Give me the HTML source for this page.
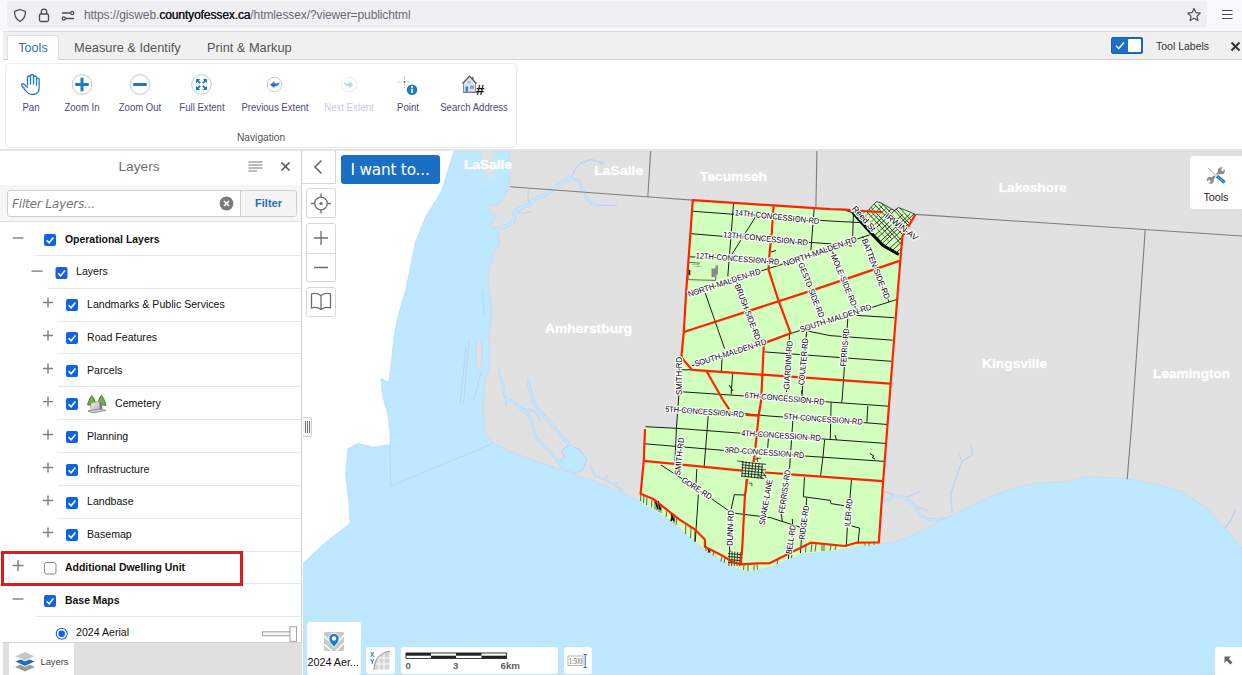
<!DOCTYPE html>
<html lang="en"><head><meta charset="utf-8"><title>County of Essex GIS</title>
<style>
*{box-sizing:border-box;margin:0;padding:0}
html,body{width:1242px;height:675px;overflow:hidden;background:#fff;font-family:"Liberation Sans",sans-serif;color:#222}
.abs{position:absolute}
#urlbar{left:6.500px;top:1px;width:1200px;height:27px;background:#f0f0f4;border-radius:4px}
#url{left:84px;top:8px;font-size:12px;color:#6a6a72;white-space:nowrap;letter-spacing:-0.1px}
#url b{color:#15141a;font-weight:normal;text-shadow:0.3px 0 0 #15141a}
#tabstrip{left:3px;top:31px;width:1239px;height:29px;background:#f0f0f0;border-top:1px solid #dcdcdc;border-bottom:1px solid #d4d4d4}
#tab1{left:7px;top:35px;width:52px;height:25px;background:#fff;border:1px solid #e0e0e0;border-bottom:none;border-radius:3px 3px 0 0;font-size:12.6px;color:#2a70c0;text-align:center;line-height:25px}
.tab{top:35px;height:26px;font-size:12.8px;color:#555;line-height:25px;white-space:nowrap}
#toolbox{left:5px;top:62.500px;width:512px;height:85px;border:1px solid #ececec;border-radius:4px;background:#fff}
.tl{top:100.500px;font-size:10.200px;transform:scaleX(0.940);color:#4d4a78;white-space:nowrap;text-align:center;width:90px;line-height:13px}
#sep150{left:0;top:149px;width:1242px;height:2px;background:#e4e4e4}
#leftpanel{left:0;top:151px;width:302px;height:524px;background:#fff;border-right:1px solid #d0d0d0}
.row{left:0;width:301px;height:33px;font-size:11px;color:#111;white-space:nowrap}
.rowline{height:1px;background:#e6e6e6;right:0}
.cb{width:12px;height:12px;border-radius:2px;background:#1a6fc9}
.cb0{width:12px;height:12px;border-radius:2px;background:#fff;border:1px solid #8a8a8a}
.pm{font-size:17px;color:#666;font-weight:300;line-height:14px;width:14px;text-align:center}
.mbtn{background:#fff;border:1px solid #d8d8d8;border-radius:3px}
</style></head><body>
<!-- browser bar -->
<div class="abs" style="left:0;top:0;width:1242px;height:31px;background:#f9f9fb"></div>
<div class="abs" id="urlbar"></div>
<div class="abs" id="url">https://gisweb.<b>countyofessex.ca</b>/htmlessex/?viewer=publichtml</div>
<svg class="abs" style="left:0;top:0" width="1242" height="31" viewBox="0 0 1242 31" fill="none" stroke="#4a4a52" stroke-width="1.3">
<path d="M20 9.5 L25.5 11.5 Q25.5 18.5 20 21.5 Q14.5 18.5 14.5 11.5 Z"/>
<rect x="39.5" y="14" width="9" height="7.5" rx="1.5"/><path d="M41.3 14 V11.8 A2.7 2.7 0 0 1 46.7 11.8 V14"/>
<path d="M62 13 H70 M66 18.5 H74"/><circle cx="72.2" cy="13" r="1.6"/><circle cx="63.8" cy="18.5" r="1.6"/>
<path d="M1194 8.5 L1195.9 12.6 L1200.3 13.1 L1197 16.1 L1197.9 20.5 L1194 18.3 L1190.1 20.5 L1191 16.1 L1187.7 13.1 L1192.100 12.6 Z" stroke-linejoin="round" stroke-width="1.2"/>
<path d="M1222 10.500 H1232.500 M1222 14.500 H1232.500 M1222 18.500 H1232.500" stroke-width="1.100"/>
</svg>
<!-- tab strip -->
<div class="abs" id="tabstrip"></div>
<div class="abs" id="tab1">Tools</div>
<div class="abs tab" style="left:74px">Measure &amp; Identify</div>
<div class="abs tab" style="left:207px">Print &amp; Markup</div>
<div class="abs" style="left:1111px;top:37px;width:32px;height:17px;background:#1a6fc9;border:1px solid #1860b0;border-radius:2px"></div>
<div class="abs" style="left:1128px;top:39px;width:13px;height:13px;background:#fff;border-radius:1px"></div>
<svg class="abs" style="left:1113px;top:39px" width="14" height="13" viewBox="0 0 14 13" fill="none" stroke="#fff" stroke-width="1.4"><path d="M3 6.8 L5.8 9.5 L11 3.5"/></svg>
<div class="abs" style="left:1156px;top:40px;font-size:10.500px;color:#333;white-space:nowrap">Tool Labels</div>
<svg class="abs" style="left:1230px;top:41px" width="12" height="12" viewBox="0 0 12 12" stroke="#333" stroke-width="2"><path d="M1.5 1.5 L9.5 9.5 M9.500 1.5 L1.5 9.5"/></svg>
<!-- toolbar -->
<div class="abs" id="toolbox"></div>
<svg class="abs" style="left:0;top:60px" width="520" height="90" viewBox="0 60 520 90">
<!-- pan hand -->
<g fill="none" stroke="#1f78c8" stroke-width="1.3" stroke-linecap="round" stroke-linejoin="round">
<path d="M27.5 85 V77.500 a1.500 1.500 0 0 1 3 0 V84 M30.500 77 V76 a1.500 1.500 0 0 1 3 0 V84 M33.500 77.500 a1.500 1.500 0 0 1 3 0 V85 M36.500 79.500 a1.300 1.300 0 0 1 2.600 0 V88 c0 4 -2.500 6.500 -6.500 6.500 c-3.500 0 -5.200 -1.200 -7.500 -4.500 l-3.200 -4.300 c-1 -1.500 0.800 -2.800 2.200 -1.600 l3.400 3.200"/>
</g>
<!-- zoom in -->
<circle cx="82" cy="84.500" r="9.800" fill="#fff" stroke="#c8c8c8" stroke-width="1"/>
<path d="M75.200 84.500 H88.800 M82 77.700 V91.300" stroke="#1f78c8" stroke-width="3"/>
<!-- zoom out -->
<circle cx="140" cy="84.500" r="9.800" fill="#fff" stroke="#c8c8c8" stroke-width="1"/>
<path d="M133.200 84.500 H146.800" stroke="#1f78c8" stroke-width="3"/>
<!-- full extent -->
<circle cx="201.500" cy="84.500" r="9.800" fill="#fff" stroke="#c8c8c8" stroke-width="1"/>
<g fill="#1f78c8"><path d="M196 79 h4.200 l-1.400 1.400 l2 2 l-1.400 1.400 l-2 -2 l-1.400 1.400 z"/><path d="M207 79 v4.200 l-1.400 -1.400 l-2 2 l-1.400 -1.400 l2 -2 l-1.400 -1.400 z"/><path d="M196 90 v-4.200 l1.400 1.400 l2 -2 l1.400 1.400 l-2 2 l1.400 1.400 z"/><path d="M207 90 h-4.200 l1.400 -1.400 l-2 -2 l1.400 -1.400 l2 2 l1.400 -1.400 z"/></g>
<!-- prev extent -->
<circle cx="274.500" cy="84.500" r="7.300" fill="#fff" stroke="#c8c8c8" stroke-width="1"/>
<path d="M270 84.800 L274.500 81.300 V83.600 C277 83.600 278.800 83.200 279.500 82.300 C279.200 85 277.500 86.200 274.500 86.200 V88.300 Z" fill="#1f78c8"/>
<!-- next extent -->
<circle cx="349" cy="84.500" r="7.300" fill="#fff" stroke="#ececec" stroke-width="1"/>
<path d="M353.500 84.800 L349 81.300 V83.600 C346.500 83.600 344.700 83.200 344 82.300 C344.300 85 346 86.200 349 86.200 V88.300 Z" fill="#b9d6ef"/>
<!-- point -->
<path d="M404.500 76 V79.500 M404.500 84 V88 M398 82 H401.500 M407.500 82 H410" stroke="#b0b0b0" stroke-width="1" stroke-dasharray="1.500 1"/>
<circle cx="404.500" cy="82" r="0.900" fill="#555"/>
<circle cx="412" cy="89.800" r="5.300" fill="#1f78c8"/>
<rect x="411.100" y="88.800" width="1.900" height="4" fill="#fff"/><circle cx="412" cy="86.900" r="1.100" fill="#fff"/>
<!-- search address -->
<path d="M463.500 83 L469.500 76.500 L475.500 83 V92 H463.500 Z" fill="#dfe4ea" stroke="#777" stroke-width="0.800"/>
<path d="M462.500 83.500 L469.500 76 L476.500 83.500" fill="none" stroke="#555" stroke-width="1.100"/>
<rect x="472" y="77" width="1.600" height="3" fill="#666"/>
<rect x="465.500" y="86.500" width="2.600" height="5" fill="#2f86d8"/><rect x="470" y="85.500" width="4" height="3.500" fill="#7aa7e6"/><rect x="467.500" y="81" width="3" height="2.500" fill="#9db8ea"/>
<path d="M463 92.500 H477" stroke="#666" stroke-width="0.800"/>
<text x="476" y="95" font-family="Liberation Sans, sans-serif" font-size="15" font-weight="bold" fill="#111">#</text>
</svg>
<div class="abs tl" style="left:-14px">Pan</div>
<div class="abs tl" style="left:37px">Zoom In</div>
<div class="abs tl" style="left:95px">Zoom Out</div>
<div class="abs tl" style="left:156.500px">Full Extent</div>
<div class="abs tl" style="left:229.500px">Previous Extent</div>
<div class="abs tl" style="left:304px;color:#c9c9dc">Next Extent</div>
<div class="abs tl" style="left:362.500px">Point</div>
<div class="abs tl" style="left:429px">Search Address</div>
<div class="abs" style="left:237px;top:132px;font-size:10.200px;color:#555;white-space:nowrap">Navigation</div>
<div class="abs" id="sep150"></div>
<!-- left panel -->
<div class="abs" id="leftpanel"></div>
<div class="abs" style="left:118.500px;top:159px;font-size:13.700px;color:#707070">Layers</div>
<svg class="abs" style="left:246px;top:158px" width="50" height="18" viewBox="246 158 50 18" fill="none"><path d="M248.500 162 H262.500 M248.500 165 H262.500 M248.500 168 H262.500 M248.500 171 H257" stroke="#777" stroke-width="1"/><path d="M281.500 162.500 L289.500 170.500 M289.500 162.500 L281.500 170.500" stroke="#555" stroke-width="1.600"/></svg>
<div class="abs" style="left:0;top:184.500px;width:301px;height:36.500px;background:#f6f6f6"></div>
<div class="abs" style="left:7px;top:190px;width:290px;height:27px;border:1px solid #cfcfcf;border-radius:3px;background:#fff"></div>
<div class="abs" style="left:240px;top:191px;width:56px;height:25px;border-left:1px solid #cfcfcf;background:#f4f4f4;border-radius:0 3px 3px 0;font-size:11px;font-weight:bold;color:#2a6ebb;text-align:center;line-height:24px">Filter</div>
<div class="abs" style="left:12px;top:196.500px;font-size:12.300px;font-style:italic;color:#777;font-family:'DejaVu Sans','Liberation Sans',sans-serif;letter-spacing:-0.3px">Filter Layers...</div>
<svg class="abs" style="left:219px;top:196px" width="15" height="15" viewBox="0 0 15 15"><circle cx="7.500" cy="7.500" r="6.900" fill="#7a7a7a"/><path d="M5 5 L10 10 M10 5 L5 10" stroke="#fff" stroke-width="1.700"/></svg>
<div class="abs" style="left:0;top:221px;width:301px;height:1px;background:#e2e2e2"></div>
<svg class="abs" style="left:0;top:222.7px" width="100" height="33" viewBox="0 222.0 100 33"><path d="M12.5 237.0 H23.5" stroke="#808080" stroke-width="1.400"/><rect x="44" y="233.0" width="12" height="12" rx="2" fill="#0f63e4"/><path d="M46.6 239.2 l2.500 2.600 l4.300 -5.300" fill="none" stroke="#fff" stroke-width="1.600"/></svg>
<div class="abs" style="left:65px;top:232.5px;font-size:10.450px;font-weight:bold;color:#111;white-space:nowrap;line-height:13px">Operational Layers</div>
<div class="abs rowline" style="left:36px;top:254.8px;width:265px"></div>
<svg class="abs" style="left:0;top:255.5px" width="100" height="33" viewBox="0 254.8 100 33"><path d="M31.5 269.9 H42.5" stroke="#808080" stroke-width="1.400"/><rect x="55.5" y="265.9" width="12" height="12" rx="2" fill="#0f63e4"/><path d="M58.1 272.1 l2.500 2.600 l4.300 -5.300" fill="none" stroke="#fff" stroke-width="1.600"/></svg>
<div class="abs" style="left:76px;top:265.4px;font-size:10.600px;font-weight:normal;color:#111;white-space:nowrap;line-height:13px">Layers</div>
<div class="abs rowline" style="left:48px;top:287.7px;width:253px"></div>
<svg class="abs" style="left:0;top:288.4px" width="100" height="33" viewBox="0 287.7 100 33"><path d="M43 302.2 H53 M48 297.2 V307.2" stroke="#808080" stroke-width="1.400"/><rect x="66" y="298.7" width="12" height="12" rx="2" fill="#0f63e4"/><path d="M68.6 304.9 l2.500 2.600 l4.300 -5.300" fill="none" stroke="#fff" stroke-width="1.600"/></svg>
<div class="abs" style="left:87px;top:298.2px;font-size:10.600px;font-weight:normal;color:#111;white-space:nowrap;line-height:13px">Landmarks &amp; Public Services</div>
<div class="abs rowline" style="left:58px;top:320.6px;width:243px"></div>
<svg class="abs" style="left:0;top:321.3px" width="100" height="33" viewBox="0 320.6 100 33"><path d="M43 335.1 H53 M48 330.1 V340.1" stroke="#808080" stroke-width="1.400"/><rect x="66" y="331.6" width="12" height="12" rx="2" fill="#0f63e4"/><path d="M68.6 337.8 l2.500 2.600 l4.300 -5.300" fill="none" stroke="#fff" stroke-width="1.600"/></svg>
<div class="abs" style="left:87px;top:331.1px;font-size:10.600px;font-weight:normal;color:#111;white-space:nowrap;line-height:13px">Road Features</div>
<div class="abs rowline" style="left:58px;top:353.4px;width:243px"></div>
<svg class="abs" style="left:0;top:354.1px" width="100" height="33" viewBox="0 353.4 100 33"><path d="M43 367.9 H53 M48 362.9 V372.9" stroke="#808080" stroke-width="1.400"/><rect x="66" y="364.4" width="12" height="12" rx="2" fill="#0f63e4"/><path d="M68.6 370.6 l2.500 2.600 l4.300 -5.300" fill="none" stroke="#fff" stroke-width="1.600"/></svg>
<div class="abs" style="left:87px;top:363.9px;font-size:10.600px;font-weight:normal;color:#111;white-space:nowrap;line-height:13px">Parcels</div>
<div class="abs rowline" style="left:58px;top:386.2px;width:243px"></div>
<svg class="abs" style="left:0;top:386.9px" width="100" height="33" viewBox="0 386.2 100 33"><path d="M43 400.8 H53 M48 395.7 V405.7" stroke="#808080" stroke-width="1.400"/><rect x="66" y="397.2" width="12" height="12" rx="2" fill="#0f63e4"/><path d="M68.6 403.4 l2.500 2.600 l4.300 -5.300" fill="none" stroke="#fff" stroke-width="1.600"/></svg>
<div class="abs" style="left:115px;top:396.7px;font-size:10.600px;font-weight:normal;color:#111;white-space:nowrap;line-height:13px">Cemetery</div>
<div class="abs rowline" style="left:58px;top:419.1px;width:243px"></div>
<svg class="abs" style="left:0;top:419.8px" width="100" height="33" viewBox="0 419.1 100 33"><path d="M43 433.6 H53 M48 428.6 V438.6" stroke="#808080" stroke-width="1.400"/><rect x="66" y="430.1" width="12" height="12" rx="2" fill="#0f63e4"/><path d="M68.6 436.3 l2.500 2.600 l4.300 -5.300" fill="none" stroke="#fff" stroke-width="1.600"/></svg>
<div class="abs" style="left:87px;top:429.6px;font-size:10.600px;font-weight:normal;color:#111;white-space:nowrap;line-height:13px">Planning</div>
<div class="abs rowline" style="left:58px;top:452.0px;width:243px"></div>
<svg class="abs" style="left:0;top:452.7px" width="100" height="33" viewBox="0 452.0 100 33"><path d="M43 466.5 H53 M48 461.5 V471.5" stroke="#808080" stroke-width="1.400"/><rect x="66" y="463.0" width="12" height="12" rx="2" fill="#0f63e4"/><path d="M68.6 469.2 l2.500 2.600 l4.300 -5.300" fill="none" stroke="#fff" stroke-width="1.600"/></svg>
<div class="abs" style="left:87px;top:462.5px;font-size:10.600px;font-weight:normal;color:#111;white-space:nowrap;line-height:13px">Infrastructure</div>
<div class="abs rowline" style="left:58px;top:484.8px;width:243px"></div>
<svg class="abs" style="left:0;top:485.5px" width="100" height="33" viewBox="0 484.8 100 33"><path d="M43 499.3 H53 M48 494.3 V504.3" stroke="#808080" stroke-width="1.400"/><rect x="66" y="495.8" width="12" height="12" rx="2" fill="#0f63e4"/><path d="M68.6 502.0 l2.500 2.600 l4.300 -5.300" fill="none" stroke="#fff" stroke-width="1.600"/></svg>
<div class="abs" style="left:87px;top:495.3px;font-size:10.600px;font-weight:normal;color:#111;white-space:nowrap;line-height:13px">Landbase</div>
<div class="abs rowline" style="left:58px;top:517.7px;width:243px"></div>
<svg class="abs" style="left:0;top:518.4px" width="100" height="33" viewBox="0 517.7 100 33"><path d="M43 532.2 H53 M48 527.2 V537.2" stroke="#808080" stroke-width="1.400"/><rect x="66" y="528.7" width="12" height="12" rx="2" fill="#0f63e4"/><path d="M68.6 534.9 l2.500 2.600 l4.300 -5.300" fill="none" stroke="#fff" stroke-width="1.600"/></svg>
<div class="abs" style="left:87px;top:528.2px;font-size:10.600px;font-weight:normal;color:#111;white-space:nowrap;line-height:13px">Basemap</div>
<div class="abs rowline" style="left:58px;top:550.5px;width:243px"></div>
<svg class="abs" style="left:0;top:551.2px" width="100" height="33" viewBox="0 550.5 100 33"><path d="M12.5 565.0 H23.5 M18 559.5 V570.5" stroke="#808080" stroke-width="1.400"/><rect x="44.5" y="562.0" width="11.500" height="11.500" rx="2" fill="#fff" stroke="#8a8a8a" stroke-width="1"/></svg>
<div class="abs" style="left:65px;top:561.0px;font-size:10.450px;font-weight:bold;color:#111;white-space:nowrap;line-height:13px">Additional Dwelling Unit</div>
<div class="abs rowline" style="left:36px;top:583.4px;width:265px"></div>
<svg class="abs" style="left:0;top:584.1px" width="100" height="33" viewBox="0 583.4 100 33"><path d="M12.5 598.4 H23.5" stroke="#808080" stroke-width="1.400"/><rect x="44" y="594.4" width="12" height="12" rx="2" fill="#0f63e4"/><path d="M46.6 600.6 l2.500 2.600 l4.300 -5.300" fill="none" stroke="#fff" stroke-width="1.600"/></svg>
<div class="abs" style="left:65px;top:593.9px;font-size:10.450px;font-weight:bold;color:#111;white-space:nowrap;line-height:13px">Base Maps</div>
<div class="abs rowline" style="left:36px;top:616.2px;width:265px"></div>
<svg class="abs" style="left:50px;top:622.7px" width="252" height="20" viewBox="50 622.7 252 20"><circle cx="61.700" cy="633.500" r="5.500" fill="#fff" stroke="#0f63e4" stroke-width="1.100"/><circle cx="61.700" cy="633.500" r="3.300" fill="#0f63e4"/><rect x="262.500" y="631.500" width="29" height="4" fill="#f4f4f4" stroke="#a0a0a0" stroke-width="1"/><rect x="290" y="626.500" width="6.500" height="14.500" fill="#fff" stroke="#a0a0a0" stroke-width="1"/></svg>
<div class="abs" style="left:76px;top:624.7px;font-size:10.600px;color:#111;white-space:nowrap;line-height:13px;margin-top:1.5px">2024 Aerial</div>
<svg class="abs" style="left:87px;top:394.500px" width="21" height="19" viewBox="0 0 21 19"><defs><linearGradient id="stone" x1="0" y1="0" x2="1" y2="1"><stop offset="0" stop-color="#f2f2f2"/><stop offset="1" stop-color="#b4b4b4"/></linearGradient></defs><path d="M0.800 10 C0.500 7.500 2 6.500 2.200 5 C2.500 3 4 2 4.800 0.600 C5.800 2 7 3 7.300 5 C7.800 6.500 8.800 7.500 8.500 10 Z" fill="#72b33c" stroke="#2f6e1c" stroke-width="0.800"/><path d="M10.500 9 C10.200 6.500 11.800 6 12 4.500 C12.300 2.800 13.500 1.500 14.300 0.300 C15.300 1.500 16.800 3 17.200 5 C17.800 7 19.200 8 18.800 10.500 Z" fill="#72b33c" stroke="#2f6e1c" stroke-width="0.800"/><path d="M3.800 8 L12.800 6.300 L12.800 14.300 L3.800 16 Z" fill="url(#stone)" stroke="#777" stroke-width="0.500"/><path d="M12.800 6.300 L15.300 7.300 L15.300 14.800 L12.800 14.300 Z" fill="#7e7e7e"/><path d="M1 16 L4 15.400 L12.800 14 L15.500 14.500 L18.800 15.300 L6 18 Z" fill="#cfcfcf" stroke="#666" stroke-width="0.600"/></svg>
<div class="abs" style="left:1px;top:551px;width:242px;height:35px;border:3px solid #e0191f"></div>
<div class="abs" style="left:2.500px;top:642px;width:299.500px;height:33px;background:#e0e0e0;border-top:1px solid #d2d2d2"></div>
<div class="abs" style="left:0;top:642px;width:2.500px;height:33px;background:#fff"></div>
<div class="abs" style="left:8.500px;top:643px;width:65px;height:32px;background:#fff"></div>
<svg class="abs" style="left:13.500px;top:650.500px" width="22" height="21" viewBox="0 0 22 21"><path d="M11 11.500 L1 16 L11 20.500 L21 16 Z" fill="#9c9c9c"/><path d="M11 5.800 L0.500 10.600 L11 15.400 L21.500 10.600 Z" fill="#1a6fc9" stroke="#fff" stroke-width="1"/><path d="M11 0.500 L0.500 5.200 L11 9.900 L21.500 5.200 Z" fill="#c6c6c6" stroke="#fff" stroke-width="1"/></svg>
<div class="abs" style="left:40.500px;top:657px;font-size:9.300px;color:#444">Layers</div>
<svg class="abs" id="mapsvg" style="left:303px;top:151px" width="939" height="524" viewBox="303 151 939 524" font-family="Liberation Sans, sans-serif">
<rect x="303" y="151" width="939" height="524" fill="#fff"/>
<path d="M454.0 151.0 L441.5 191.0 L425.0 218.0 L415.5 242.0 L405.6 290.0 L397.8 316.7 L394.4 334.4 L391.1 363.3 L388.9 382.2 L381.1 378.4 L382.2 394.4 L387.8 414.4 L390.0 432.2 L390.0 444.4 L373.3 447.3 L357.8 443.3 L347.8 448.9 L345.6 474.4 L348.9 503.3 L350.0 523.3 L324.4 543.3 L303.0 563.5 L303.0 675.0 L1242.0 675.0 L1242.0 151.0 Z" fill="#bee8ff" stroke="#b4d4f6" stroke-width="0.6"/>
<path d="M510.0 151.0 L510.0 185.6 L504.4 196.7 L497.8 205.6 L486.7 205.6 L495.6 216.7 L490.0 226.7 L497.8 231.1 L500.0 243.3 L493.3 254.4 L487.8 276.7 L488.9 290.0 L492.2 312.2 L488.9 334.4 L490.0 363.3 L485.6 378.9 L483.3 401.1 L484.4 427.8 L488.0 438.0 L493.3 443.3 L508.9 451.1 L535.6 461.1 L568.9 472.2 L591.1 480.0 L613.3 488.9 L635.6 498.9 L640.0 501.8 L662.6 515.3 L678.9 527.6 L695.2 542.2 L711.5 553.6 L727.8 564.2 L740.8 570.0 L750.6 571.5 L770.0 566.8 L802.6 553.8 L835.0 550.5 L861.0 545.5 L878.8 544.4 L893.8 541.9 L905.2 538.5 L937.8 522.2 L970.3 505.9 L1002.9 491.6 L1031.4 483.5 L1068.1 481.5 L1084.4 476.6 L1108.8 477.4 L1133.3 479.4 L1161.8 485.5 L1182.2 491.6 L1206.6 507.9 L1227.0 530.3 L1242.0 548.7 L1242.0 151.0 Z" fill="#e1e1e1" stroke="#c9d3e6" stroke-width="0.6"/>
<path d="M482.0 151.0 L483.0 170.0 L487.0 176.0 L491.5 179.0 L493.3 176.0 L492.0 160.0 L493.5 151.0 Z" fill="#e1e1e1"/>
<ellipse cx="478.9" cy="354.4" rx="3" ry="16" fill="#e1e1e1" stroke="#b9cdf3" stroke-width="0.5"/>
<path d="M390 444.4 L390.700 486 L493.300 443.300" fill="none" stroke="#b4cdf5" stroke-width="0.700"/>
<path d="M466 348 L460 404 M469 340 L463.500 404 M481 372 L474 400 M484 316 L482.500 290" fill="none" stroke="#b4c8f2" stroke-width="0.600"/>
<clipPath id="landclip"><path d="M510.0 151.0 L510.0 185.6 L504.4 196.7 L497.8 205.6 L486.7 205.6 L495.6 216.7 L490.0 226.7 L497.8 231.1 L500.0 243.3 L493.3 254.4 L487.8 276.7 L488.9 290.0 L492.2 312.2 L488.9 334.4 L490.0 363.3 L485.6 378.9 L483.3 401.1 L484.4 427.8 L488.0 438.0 L493.3 443.3 L508.9 451.1 L535.6 461.1 L568.9 472.2 L591.1 480.0 L613.3 488.9 L635.6 498.9 L640.0 501.8 L662.6 515.3 L678.9 527.6 L695.2 542.2 L711.5 553.6 L727.8 564.2 L740.8 570.0 L750.6 571.5 L770.0 566.8 L802.6 553.8 L835.0 550.5 L861.0 545.5 L878.8 544.4 L893.8 541.9 L905.2 538.5 L937.8 522.2 L970.3 505.9 L1002.9 491.6 L1031.4 483.5 L1068.1 481.5 L1084.4 476.6 L1108.8 477.4 L1133.3 479.4 L1161.8 485.5 L1182.2 491.6 L1206.6 507.9 L1227.0 530.3 L1242.0 548.7 L1242.0 151.0 Z"/></clipPath>
<g clip-path="url(#landclip)">
<path d="M487.8 232.7 L493.3 230.0 L506.7 225.6 L513.3 222.2 L514.4 212.2 L520.0 208.2 L528.9 204.4 L533.3 200.0 L546.7 193.3 L555.6 187.8 L564.4 181.1 L571.1 177.8" fill="none" stroke="#b9cbf6" stroke-width="3.7" stroke-linejoin="round" stroke-linecap="round"/>
<path d="M571.1 177.8 L578.9 181.1 L582.2 188.9 L585.6 192.2 L586.7 197.8 L591.1 203.3 L595.6 205.1" fill="none" stroke="#b9cbf6" stroke-width="2.7" stroke-linejoin="round" stroke-linecap="round"/>
<path d="M595.6 205.1 L616.7 205.6" fill="none" stroke="#bcd0f8" stroke-width="1.2" stroke-linejoin="round" stroke-linecap="round"/>
<path d="M571.1 177.8 L575.6 168.9 L580.0 163.3 L591.1 159.3 L603.3 163.3" fill="none" stroke="#bcd0f8" stroke-width="1.3" stroke-linejoin="round" stroke-linecap="round"/>
<path d="M528.9 204.4 L527.8 194.4 L528.9 190.0" fill="none" stroke="#bcd0f8" stroke-width="1.1" stroke-linejoin="round" stroke-linecap="round"/>
<path d="M514.4 212.2 L524.4 213.3 L531.1 211.8" fill="none" stroke="#bcd0f8" stroke-width="1.1" stroke-linejoin="round" stroke-linecap="round"/>
<path d="M498.9 370.0 L501.0 378.0 L502.1 381.0" fill="none" stroke="#b9cbf6" stroke-width="2.2" stroke-linejoin="round" stroke-linecap="round"/>
<path d="M502.1 380.0 L504.1 391.6 L506.0 399.3 L512.7 401.2 L521.4 408.9 L530.1 416.6 L532.9 426.2 L535.8 437.8 L543.5 445.5 L551.2 453.2 L557.0 460.9 L562.8 467.6 L574.3 472.4" fill="none" stroke="#b9cbf6" stroke-width="2.7" stroke-linejoin="round" stroke-linecap="round"/>
<path d="M506.0 399.3 L506.0 406.0" fill="none" stroke="#bcd0f8" stroke-width="1.3" stroke-linejoin="round" stroke-linecap="round"/>
<path d="M528.1 380.0 L530.1 391.6 L534.9 405.0 L545.5 417.5 L557.0 430.1 L562.8 437.8 L570.5 445.5 L576.3 451.2" fill="none" stroke="#b9cbf6" stroke-width="2.9" stroke-linejoin="round" stroke-linecap="round"/>
<path d="M521.4 408.9 L528.1 410.4 L534.9 410.8 L539.7 418.5" fill="none" stroke="#b9cbf6" stroke-width="2.2" stroke-linejoin="round" stroke-linecap="round"/>
<path d="M590.7 467.6 L595.5 476.3 L605.1 479.2 L614.8 484.9 L622.5 490.7" fill="none" stroke="#b9cbf6" stroke-width="2.2" stroke-linejoin="round" stroke-linecap="round"/>
<path d="M605.1 479.2 L607.1 475.3" fill="none" stroke="#bcd0f8" stroke-width="1.1" stroke-linejoin="round" stroke-linecap="round"/>
<path d="M614.8 484.9 L617.7 482.0" fill="none" stroke="#bcd0f8" stroke-width="1.1" stroke-linejoin="round" stroke-linecap="round"/>
<path d="M884.8 501.8 L895.0 495.7 L905.2 497.8 L915.4 506.7 L921.5 516.1 L931.6 520.2 L943.9 518.1" fill="none" stroke="#b9cbf6" stroke-width="2.7" stroke-linejoin="round" stroke-linecap="round"/>
<path d="M884.8 491.6 L895.0 495.7" fill="none" stroke="#bcd0f8" stroke-width="1.3" stroke-linejoin="round" stroke-linecap="round"/>
<path d="M905.2 497.8 L915.4 493.7 L919.4 491.6" fill="none" stroke="#bcd0f8" stroke-width="1.1" stroke-linejoin="round" stroke-linecap="round"/>
<path d="M915.4 506.7 L927.6 510.0" fill="none" stroke="#bcd0f8" stroke-width="1.1" stroke-linejoin="round" stroke-linecap="round"/>
<path d="M952.0 512.0 L950.8 493.7 L956.1 477.4 L962.2 461.1 L972.4 455.0 L971.2 444.8" fill="none" stroke="#bcd0f8" stroke-width="1.3" stroke-linejoin="round" stroke-linecap="round"/>
<path d="M962.2 461.1 L958.1 453.0" fill="none" stroke="#bcd0f8" stroke-width="1.1" stroke-linejoin="round" stroke-linecap="round"/>
<path d="M1186.2 495.7 L1194.4 499.8" fill="none" stroke="#bcd0f8" stroke-width="1.1" stroke-linejoin="round" stroke-linecap="round"/>
<path d="M1224.9 528.3 L1231.0 520.2 L1235.1 510.0" fill="none" stroke="#bcd0f8" stroke-width="1.5" stroke-linejoin="round" stroke-linecap="round"/>
<path d="M562.8 449.3 L570.5 444.5 L574.3 447.4 L580.1 449.3 L583.0 454.1 L586.9 458.9 L584.9 465.7 L582.0 470.5 L574.3 472.8 L564.7 468.2 L558.9 461.8 L564.7 457.0 L561.8 452.2 Z" fill="#bee8ff" stroke="#b9cbf6" stroke-width="1" stroke-linejoin="round"/>
</g>
<path d="M487.8 232.7 L493.3 230.0 L506.7 225.6 L513.3 222.2 L514.4 212.2 L520.0 208.2 L528.9 204.4 L533.3 200.0 L546.7 193.3 L555.6 187.8 L564.4 181.1 L571.1 177.8" fill="none" stroke="#bee8ff" stroke-width="3.0" stroke-linejoin="round" stroke-linecap="round"/>
<path d="M571.1 177.8 L578.9 181.1 L582.2 188.9 L585.6 192.2 L586.7 197.8 L591.1 203.3 L595.6 205.1" fill="none" stroke="#bee8ff" stroke-width="2.0" stroke-linejoin="round" stroke-linecap="round"/>
<path d="M498.9 370.0 L501.0 378.0 L502.1 381.0" fill="none" stroke="#bee8ff" stroke-width="1.5" stroke-linejoin="round" stroke-linecap="round"/>
<path d="M502.1 380.0 L504.1 391.6 L506.0 399.3 L512.7 401.2 L521.4 408.9 L530.1 416.6 L532.9 426.2 L535.8 437.8 L543.5 445.5 L551.2 453.2 L557.0 460.9 L562.8 467.6 L574.3 472.4" fill="none" stroke="#bee8ff" stroke-width="2.0" stroke-linejoin="round" stroke-linecap="round"/>
<path d="M528.1 380.0 L530.1 391.6 L534.9 405.0 L545.5 417.5 L557.0 430.1 L562.8 437.8 L570.5 445.5 L576.3 451.2" fill="none" stroke="#bee8ff" stroke-width="2.2" stroke-linejoin="round" stroke-linecap="round"/>
<path d="M521.4 408.9 L528.1 410.4 L534.9 410.8 L539.7 418.5" fill="none" stroke="#bee8ff" stroke-width="1.5" stroke-linejoin="round" stroke-linecap="round"/>
<path d="M590.7 467.6 L595.5 476.3 L605.1 479.2 L614.8 484.9 L622.5 490.7" fill="none" stroke="#bee8ff" stroke-width="1.5" stroke-linejoin="round" stroke-linecap="round"/>
<path d="M884.8 501.8 L895.0 495.7 L905.2 497.8 L915.4 506.7 L921.5 516.1 L931.6 520.2 L943.9 518.1" fill="none" stroke="#bee8ff" stroke-width="2.0" stroke-linejoin="round" stroke-linecap="round"/>
<path d="M510.0 186.7 L660.0 197.8 L692.8 200.1" fill="none" stroke="#7d7d7d" stroke-width="1.100"/>
<path d="M650.7 151.0 L647.8 196.7" fill="none" stroke="#7d7d7d" stroke-width="1.100"/>
<path d="M816.9 151.0 L815.9 207.5" fill="none" stroke="#7d7d7d" stroke-width="1.100"/>
<path d="M915.5 214.4 L1242.0 236.0" fill="none" stroke="#7d7d7d" stroke-width="1.100"/>
<path d="M1145.2 230.0 L1132.0 420.0 L1127.2 479.4" fill="none" stroke="#7d7d7d" stroke-width="1.100"/>
<path d="M692.8 200.1 L830.0 209.2 L844.6 209.6 L870.0 211.5 L875.5 201.4 L878.8 202.2 L894.3 210.4 L899.2 207.9 L904.0 209.6 L913.8 214.4 L915.5 214.4 L902.4 236.4 L900.8 255.2 L897.9 290.0 L889.4 400.0 L883.2 480.0 L878.8 544.4 L878.8 544.4 L861.0 545.5 L835.0 550.5 L802.6 553.8 L770.0 566.8 L750.6 571.5 L740.8 570.0 L727.8 564.2 L711.5 553.6 L695.2 542.2 L678.9 527.6 L662.6 515.3 L639.8 501.5 L640.6 494.0 L643.8 460.0 L645.3 426.7 L676.4 428.3 L678.9 395.0 L681.4 357.0 L683.8 331.5 L686.3 290.0 Z" fill="#d3ffbe"/>
<path d="M692.0 211.2 L735.2 214.4 L830.0 221.0 L860.0 222.6" fill="none" stroke="#1a1a1a" stroke-width="1"/>
<path d="M691.2 233.7 L723.8 236.4 L830.0 243.8 L852.0 246.0" fill="none" stroke="#1a1a1a" stroke-width="1"/>
<path d="M689.6 256.8 L779.2 261.7" fill="none" stroke="#1a1a1a" stroke-width="1"/>
<path d="M687.9 294.3 L790.0 261.7 L869.8 234.8" fill="none" stroke="#1a1a1a" stroke-width="1"/>
<path d="M733.5 203.8 L727.8 276.4" fill="none" stroke="#1a1a1a" stroke-width="1"/>
<path d="M755.5 216.9 L731.9 254.4" fill="none" stroke="#1a1a1a" stroke-width="1"/>
<path d="M814.2 207.9 L810.9 250.3" fill="none" stroke="#1a1a1a" stroke-width="1"/>
<path d="M853.5 212.8 L852.7 236.4" fill="none" stroke="#1a1a1a" stroke-width="1"/>
<path d="M845.4 210.4 L852.7 212.8" fill="none" stroke="#1a1a1a" stroke-width="1"/>
<path d="M771.0 252.0 L776.0 250.5" fill="none" stroke="#1a1a1a" stroke-width="1"/>
<path d="M734.0 280.0 L738.0 284.0" fill="none" stroke="#1a1a1a" stroke-width="1"/>
<path d="M758.4 339.6 L760.5 345.0" fill="none" stroke="#1a1a1a" stroke-width="1"/>
<path d="M799.0 258.5 L800.8 263.0" fill="none" stroke="#1a1a1a" stroke-width="1"/>
<path d="M822.0 316.8 L824.0 322.0" fill="none" stroke="#1a1a1a" stroke-width="1"/>
<path d="M832.0 250.5 L833.4 254.3" fill="none" stroke="#1a1a1a" stroke-width="1"/>
<path d="M854.5 305.4 L856.0 309.5" fill="none" stroke="#1a1a1a" stroke-width="1"/>
<path d="M862.0 236.5 L864.3 238.6" fill="none" stroke="#1a1a1a" stroke-width="1"/>
<path d="M887.8 298.9 L889.0 302.0" fill="none" stroke="#1a1a1a" stroke-width="1"/>
<path d="M705.0 292.4 L724.6 348.7" fill="none" stroke="#1a1a1a" stroke-width="1"/>
<path d="M722.1 357.6 L721.3 372.3" fill="none" stroke="#1a1a1a" stroke-width="1"/>
<path d="M732.7 373.1 L731.1 394.3" fill="none" stroke="#1a1a1a" stroke-width="1"/>
<path d="M729.0 385.0 L733.0 391.0" fill="none" stroke="#1a1a1a" stroke-width="1"/>
<path d="M682.2 391.8 L743.3 395.9 L824.6 401.7 L889.8 406.3" fill="none" stroke="#1a1a1a" stroke-width="1"/>
<path d="M764.5 351.9 L830.0 356.8 L892.6 361.4" fill="none" stroke="#1a1a1a" stroke-width="1"/>
<path d="M806.0 330.7 L830.0 335.6 L892.6 340.2" fill="none" stroke="#1a1a1a" stroke-width="1"/>
<path d="M855.2 315.3 L894.3 317.7" fill="none" stroke="#1a1a1a" stroke-width="1"/>
<path d="M766.0 342.0 L790.0 333.7 L898.3 299.0" fill="none" stroke="#1a1a1a" stroke-width="1"/>
<path d="M692.0 365.8 L766.1 341.3" fill="none" stroke="#1a1a1a" stroke-width="1"/>
<path d="M681.4 369.8 L692.0 369.8" fill="none" stroke="#1a1a1a" stroke-width="1"/>
<path d="M806.5 331.5 L801.7 400.0" fill="none" stroke="#1a1a1a" stroke-width="1"/>
<path d="M847.8 318.5 L842.1 400.0 L841.4 402.7" fill="none" stroke="#1a1a1a" stroke-width="1"/>
<path d="M789.5 334.0 L786.5 392.0" fill="none" stroke="#1a1a1a" stroke-width="1"/>
<path d="M678.9 394.9 L676.4 428.3 L674.8 465.0" fill="none" stroke="#1a1a1a" stroke-width="1"/>
<path d="M645.5 426.7 L676.4 428.3 L740.8 433.2 L822.1 438.9 L885.7 443.4" fill="none" stroke="#1a1a1a" stroke-width="1"/>
<path d="M645.0 443.8 L722.9 450.3 L805.0 456.0 L884.9 461.4" fill="none" stroke="#1a1a1a" stroke-width="1"/>
<path d="M708.2 416.1 L704.1 467.4" fill="none" stroke="#1a1a1a" stroke-width="1"/>
<path d="M665.0 408.7 L744.0 413.6 L770.0 416.1 L863.7 422.6 L887.6 424.5" fill="none" stroke="#1a1a1a" stroke-width="1"/>
<path d="M801.8 390.0 L801.8 394.0" fill="none" stroke="#1a1a1a" stroke-width="1"/>
<path d="M831.1 402.7 L830.3 438.9" fill="none" stroke="#1a1a1a" stroke-width="1"/>
<path d="M867.8 406.0 L866.9 422.6" fill="none" stroke="#1a1a1a" stroke-width="1"/>
<path d="M824.6 439.7 L823.0 456.8 L820.5 476.4" fill="none" stroke="#1a1a1a" stroke-width="1"/>
<path d="M792.8 421.0 L789.6 468.2 L787.8 469.6" fill="none" stroke="#1a1a1a" stroke-width="1"/>
<path d="M781.2 513.6 L782.3 521.5" fill="none" stroke="#1a1a1a" stroke-width="1"/>
<path d="M804.5 477.2 L803.4 496.7 L830.3 500.4 L831.1 503.6 L844.1 505.7" fill="none" stroke="#1a1a1a" stroke-width="1"/>
<path d="M851.5 479.6 L849.8 500.0" fill="none" stroke="#1a1a1a" stroke-width="1"/>
<path d="M847.4 527.2 L846.3 545.2" fill="none" stroke="#1a1a1a" stroke-width="1"/>
<path d="M848.0 525.0 L859.6 528.1 L858.0 543.5" fill="none" stroke="#1a1a1a" stroke-width="1"/>
<path d="M806.7 497.9 L806.3 505.4" fill="none" stroke="#1a1a1a" stroke-width="1"/>
<path d="M801.4 539.6 L800.5 553.0" fill="none" stroke="#1a1a1a" stroke-width="1"/>
<path d="M735.9 513.4 L770.0 517.5 L800.1 527.2" fill="none" stroke="#1a1a1a" stroke-width="1"/>
<path d="M768.5 437.2 L767.7 447.8" fill="none" stroke="#1a1a1a" stroke-width="1"/>
<path d="M661.0 465.0 L682.1 478.8" fill="none" stroke="#1a1a1a" stroke-width="1"/>
<path d="M711.5 498.7 L727.8 510.1 L735.9 513.4" fill="none" stroke="#1a1a1a" stroke-width="1"/>
<path d="M696.8 469.0 L696.0 483.7" fill="none" stroke="#1a1a1a" stroke-width="1"/>
<path d="M698.4 494.7 L695.2 541.9" fill="none" stroke="#1a1a1a" stroke-width="1"/>
<path d="M734.3 494.7 L731.0 510.1" fill="none" stroke="#1a1a1a" stroke-width="1"/>
<path d="M729.4 546.0 L730.0 552.0" fill="none" stroke="#1a1a1a" stroke-width="1"/>
<path d="M734.3 494.7 L744.0 495.0 L746.5 491.5" fill="none" stroke="#1a1a1a" stroke-width="1"/>
<path d="M792.6 525.0 L792.3 519.0" fill="none" stroke="#1a1a1a" stroke-width="1"/>
<path d="M788.7 554.2 L788.5 559.0" fill="none" stroke="#1a1a1a" stroke-width="1"/>
<path d="M835.0 435.0 L836.5 440.0" fill="none" stroke="#1a1a1a" stroke-width="1"/>
<path d="M870.0 453.5 L874.0 456.0 L872.0 457.5 L875.0 459.0" fill="none" stroke="#1a1a1a" stroke-width="1"/>
<path d="M687 279.600 L715.600 280.400 L716 274 M688 262.500 L700 263 M688.500 262 L688 279" fill="none" stroke="#444" stroke-width="0.800"/>
<path d="M711.500 268.500 h4 v-3 h2.500 v9 h-3 v2.500 h-3.500 z" fill="#8a8a8a"/>
<path d="M692 264.500 h7 M694 266.500 h8 M698 263 v4" stroke="#999" stroke-width="0.600"/>
<path d="M688 267 v4 M689.500 270 v5" stroke="#111" stroke-width="1.600"/>
<clipPath id="essexclip"><path d="M854.4 212.5 L866.6 212.0 L876.4 201.7 L881.2 203.0 L894.3 210.4 L898.4 207.6 L904.1 209.6 L915.5 214.4 L902.4 236.4 L901.1 254.8 L882.9 245.7 L868.2 230.7 Z"/></clipPath>
<g clip-path="url(#essexclip)">
<path d="M862.6 213.2 L888.8 241.5" stroke="#6a7a6a" stroke-width="0.800"/>
<path d="M862.4 207.0 L891.5 238.5" stroke="#111" stroke-width="0.800"/>
<path d="M861.2 200.8 L901.1 243.8" stroke="#111" stroke-width="0.800"/>
<path d="M863.8 199.6 L902.9 241.8" stroke="#111" stroke-width="0.800"/>
<path d="M867.6 196.8 L902.5 234.5" stroke="#111" stroke-width="0.800"/>
<path d="M878.9 204.6 L911.4 239.6" stroke="#111" stroke-width="0.800"/>
<path d="M881.5 202.8 L903.7 226.7" stroke="#111" stroke-width="0.800"/>
<path d="M877.0 191.8 L908.6 225.9" stroke="#111" stroke-width="0.800"/>
<path d="M878.8 190.5 L922.9 238.0" stroke="#111" stroke-width="0.800"/>
<path d="M884.4 191.4 L922.1 232.0" stroke="#111" stroke-width="0.800"/>
<path d="M858.3 217.8 L884.4 193.6" stroke="#5a6a5a" stroke-width="0.800"/>
<path d="M860.6 220.3 L876.2 205.8" stroke="#5a6a5a" stroke-width="0.800"/>
<path d="M863.4 223.3 L892.4 196.5" stroke="#5a6a5a" stroke-width="0.800"/>
<path d="M866.4 226.5 L887.5 207.0" stroke="#5a6a5a" stroke-width="0.800"/>
<path d="M869.2 229.6 L893.3 207.3" stroke="#111" stroke-width="0.800"/>
<path d="M871.5 232.1 L902.9 202.9" stroke="#111" stroke-width="0.800"/>
<path d="M874.7 235.5 L894.3 217.3" stroke="#111" stroke-width="0.800"/>
<path d="M877.2 238.2 L902.8 214.4" stroke="#111" stroke-width="0.800"/>
<path d="M880.3 241.5 L910.3 213.6" stroke="#111" stroke-width="0.800"/>
<path d="M882.1 243.5 L917.5 210.7" stroke="#111" stroke-width="0.800"/>
<path d="M884.6 246.1 L907.9 224.5" stroke="#111" stroke-width="0.800"/>
<path d="M888.1 249.9 L905.7 233.6" stroke="#111" stroke-width="0.800"/>
<path d="M890.4 252.4 L905.6 238.3" stroke="#111" stroke-width="0.800"/>
<path d="M893.3 255.5 L924.1 227.0" stroke="#111" stroke-width="0.800"/>
<path d="M895.8 258.3 L929.0 227.5" stroke="#111" stroke-width="0.800"/>
<path d="M898.1 260.8 L927.4 233.6" stroke="#111" stroke-width="0.800"/>
</g>
<path d="M852.7 212.5 L868.2 229.9 L882.9 245.4 L898.8 254.5" fill="none" stroke="#000" stroke-width="3" stroke-linejoin="round"/>
<path d="M876.4 201.7 L881.2 203.0 L894.3 210.4 L898.4 207.6 L904.1 209.6 L915.5 214.4" fill="none" stroke="#222" stroke-width="0.800"/>
<path d="M876.4 201.7 L866.6 212.0" fill="none" stroke="#222" stroke-width="0.800"/>
<path d="M743.0 461.0 L741.8 477.0" stroke="#111" stroke-width="0.800"/>
<path d="M746.2 461.5 L745.0 477.3" stroke="#111" stroke-width="0.800"/>
<path d="M749.4 462.0 L748.2 477.6" stroke="#111" stroke-width="0.800"/>
<path d="M752.6 462.5 L751.4 477.9" stroke="#111" stroke-width="0.800"/>
<path d="M755.8 463.0 L754.6 478.2" stroke="#111" stroke-width="0.800"/>
<path d="M759.0 463.5 L757.8 478.5" stroke="#111" stroke-width="0.800"/>
<path d="M762.2 464.0 L761.0 478.8" stroke="#111" stroke-width="0.800"/>
<path d="M741.500 462.0 L766.0 464.3" stroke="#111" stroke-width="0.800"/>
<path d="M741.500 464.8 L763.0 467.1" stroke="#111" stroke-width="0.800"/>
<path d="M741.500 467.6 L766.0 469.9" stroke="#111" stroke-width="0.800"/>
<path d="M741.500 470.4 L763.0 472.7" stroke="#111" stroke-width="0.800"/>
<path d="M741.500 473.2 L766.0 475.5" stroke="#111" stroke-width="0.800"/>
<path d="M741.500 476.0 L763.0 478.3" stroke="#111" stroke-width="0.800"/>
<path d="M737 461 l6 0.500 M754 459.500 l7 -1.500 M757 457 l0.500 5 M758 475 l6 4 M762 470 l4 8 M749 483 l3 0.300 l-0.200 3 M746 479 v8" fill="none" stroke="#111" stroke-width="0.700"/>
<path d="M729.5 551.0 L728.9 566.0" stroke="#111" stroke-width="0.800"/>
<path d="M732.2 551.3 L731.6 566.0" stroke="#111" stroke-width="0.800"/>
<path d="M734.9 551.6 L734.3 566.0" stroke="#111" stroke-width="0.800"/>
<path d="M737.6 551.9 L737.0 566.0" stroke="#111" stroke-width="0.800"/>
<path d="M740.3 552.2 L739.7 566.0" stroke="#111" stroke-width="0.800"/>
<path d="M728 553.5 L741.500 554.7" stroke="#111" stroke-width="0.800"/>
<path d="M728 556.5 L741.500 557.7" stroke="#111" stroke-width="0.800"/>
<path d="M728 559.5 L741.500 560.7" stroke="#111" stroke-width="0.800"/>
<path d="M728 562.5 L741.500 563.7" stroke="#111" stroke-width="0.800"/>
<path d="M641 494 L640.5 501" stroke="#222" stroke-width="0.700"/>
<path d="M644 495.5 L643.5 503" stroke="#222" stroke-width="0.700"/>
<path d="M647 497 L646.5 505" stroke="#222" stroke-width="0.700"/>
<path d="M652 499.5 L651.5 507.5" stroke="#222" stroke-width="0.700"/>
<path d="M655 501 L655 509.5" stroke="#222" stroke-width="0.700"/>
<path d="M657 502 L657 510.5" stroke="#222" stroke-width="0.700"/>
<path d="M659 504 L659 512" stroke="#222" stroke-width="0.700"/>
<path d="M661 505 L661 513" stroke="#222" stroke-width="0.700"/>
<path d="M667 510 L666 517" stroke="#222" stroke-width="0.700"/>
<path d="M672 514 L671 521.5" stroke="#222" stroke-width="0.700"/>
<path d="M675 516 L674 523.5" stroke="#222" stroke-width="0.700"/>
<path d="M677 517.5 L676 525" stroke="#222" stroke-width="0.700"/>
<path d="M686 523.5 L685.5 534" stroke="#222" stroke-width="0.700"/>
<path d="M691 527 L690.5 538" stroke="#222" stroke-width="0.700"/>
<path d="M695 530 L694.5 541.5" stroke="#222" stroke-width="0.700"/>
<path d="M706 547.5 L706 551" stroke="#222" stroke-width="0.700"/>
<path d="M709 549 L708 553" stroke="#222" stroke-width="0.700"/>
<path d="M714 551.5 L713 555.5" stroke="#222" stroke-width="0.700"/>
<path d="M722 556 L721 561.5" stroke="#222" stroke-width="0.700"/>
<path d="M725 558 L724 563" stroke="#222" stroke-width="0.700"/>
<path d="M744 565 L743.5 570" stroke="#222" stroke-width="0.700"/>
<path d="M748 565 L748 571" stroke="#222" stroke-width="0.700"/>
<path d="M754 564.5 L754 570.5" stroke="#222" stroke-width="0.700"/>
<path d="M757 564 L757.5 569.5" stroke="#222" stroke-width="0.700"/>
<path d="M806 544 L805.5 552.5" stroke="#222" stroke-width="0.700"/>
<path d="M812 543.5 L811 552" stroke="#222" stroke-width="0.700"/>
<path d="M816 544 L815 551.5" stroke="#222" stroke-width="0.700"/>
<path d="M822 544.5 L822 551" stroke="#222" stroke-width="0.700"/>
<path d="M824 544.5 L824 551" stroke="#222" stroke-width="0.700"/>
<path d="M831 545.5 L830 550.5" stroke="#222" stroke-width="0.700"/>
<path d="M836 546 L835 550" stroke="#222" stroke-width="0.700"/>
<path d="M865 543.5 L865 545.5" stroke="#222" stroke-width="0.700"/>
<path d="M869 543 L869 545.5" stroke="#222" stroke-width="0.700"/>
<path d="M874 542.5 L874 545" stroke="#222" stroke-width="0.700"/>
<path d="M778 560 L777 564" stroke="#222" stroke-width="0.700"/>
<path d="M792 553 L791.5 558" stroke="#222" stroke-width="0.700"/>
<path d="M655 500 l3 9 M658 501 l2.500 9 M671 513 l3 8 M673.500 514 l-2.500 7 M708 548.500 l2 4" stroke="#000" stroke-width="1.600"/>
<path d="M915.5 214.4 L902.4 236.4 L900.8 255.2 L897.9 290.0 L889.4 400.0 L883.2 480.0 L878.8 542.3 L856.4 542.7 L845.0 546.0 L810.7 542.7 L770.0 563.1 L757.1 563.4 L740.8 564.4 L731.8 561.5 L721.2 554.9 L704.9 546.8 L704.9 539.5 L695.2 529.7 L678.9 519.1 L652.8 498.7 L640.6 493.8 L643.8 460.1 L645.0 429.1" fill="none" stroke="#ff2400" stroke-width="2.200" stroke-linejoin="round"/>
<path d="M681.4 356.8 L683.8 331.5 L686.3 290.0 L692.8 200.1 L830.0 209.2 L844.6 209.6 L870.0 211.5 L882.9 212.0" fill="none" stroke="#ff2400" stroke-width="2.200" stroke-linejoin="round"/>
<path d="M683.8 332.0 L808.5 291.6 L899.5 260.9" fill="none" stroke="#ff2400" stroke-width="2.200" stroke-linejoin="round"/>
<path d="M773.5 206.3 L771.8 232.4 L769.4 255.2 L768.6 269.8 L778.3 300.0 L790.6 333.2 L766.9 342.1 L763.7 346.2 L761.2 400.0 L758.7 415.3 L756.3 438.9 L754.6 455.2 L753.5 462.0" fill="none" stroke="#ff2400" stroke-width="2.200" stroke-linejoin="round"/>
<path d="M681.4 356.8 L684.6 361.2 L692.0 369.8 L784.0 376.2 L830.0 379.3 L890.2 383.7" fill="none" stroke="#ff2400" stroke-width="2.200" stroke-linejoin="round"/>
<path d="M706.7 371.5 L723.0 400.0 L729.4 409.6" fill="none" stroke="#ff2400" stroke-width="2.200" stroke-linejoin="round"/>
<path d="M745.7 414.8 L758.7 415.7" fill="none" stroke="#ff2400" stroke-width="2.200" stroke-linejoin="round"/>
<path d="M643.8 460.9 L742.4 470.7" fill="none" stroke="#ff2400" stroke-width="2.200" stroke-linejoin="round"/>
<path d="M765.0 472.5 L784.0 473.9 L882.4 481.2" fill="none" stroke="#ff2400" stroke-width="2.200" stroke-linejoin="round"/>
<path d="M747.3 478.8 L744.9 495.5 L742.4 545.2 L740.8 563.9" fill="none" stroke="#ff2400" stroke-width="2.200" stroke-linejoin="round"/>
<g font-size="8.200" fill="#000" stroke="#fff" stroke-width="2.400" paint-order="stroke" stroke-linejoin="round" text-anchor="middle">
<text transform="translate(777.0 216.7) rotate(6)" y="2.900" textLength="85" lengthAdjust="spacingAndGlyphs">14TH-CONCESSION-RD</text>
<text transform="translate(765.7 238.5) rotate(5.5)" y="2.900" textLength="85" lengthAdjust="spacingAndGlyphs">13TH-CONCESSION-RD</text>
<text transform="translate(737.6 258.6) rotate(4.5)" y="2.900" textLength="84" lengthAdjust="spacingAndGlyphs">12TH-CONCESSION-RD</text>
<text transform="translate(724.2 282.5) rotate(-18)" y="2.900" textLength="76" lengthAdjust="spacingAndGlyphs">NORTH-MALDEN-RD</text>
<text transform="translate(820.0 251.5) rotate(-19)" y="2.900" textLength="77" lengthAdjust="spacingAndGlyphs">NORTH-MALDEN-RD</text>
<text transform="translate(747.9 312.0) rotate(69)" y="2.900" textLength="59" lengthAdjust="spacingAndGlyphs">BRUSH-SIDE-RD</text>
<text transform="translate(811.4 290.0) rotate(68.5)" y="2.900" textLength="58" lengthAdjust="spacingAndGlyphs">GESTO-SIDE-RD</text>
<text transform="translate(844.0 280.0) rotate(67.5)" y="2.900" textLength="55" lengthAdjust="spacingAndGlyphs">MOLE-SIDE-RD</text>
<text transform="translate(876.0 268.8) rotate(68.7)" y="2.900" textLength="64" lengthAdjust="spacingAndGlyphs">BATTEN-SIDE-RD</text>
<text transform="translate(864.0 218.5) rotate(48)" y="2.900" textLength="31" lengthAdjust="spacingAndGlyphs">Reed St</text>
<text transform="translate(901.6 226.7) rotate(38)" y="2.900" textLength="39" lengthAdjust="spacingAndGlyphs">IRWIN-AV</text>
<text transform="translate(730.3 352.7) rotate(-17.6)" y="2.900" textLength="75" lengthAdjust="spacingAndGlyphs">SOUTH-MALDEN-RD</text>
<text transform="translate(835.6 318.1) rotate(-18.2)" y="2.900" textLength="75" lengthAdjust="spacingAndGlyphs">SOUTH-MALDEN-RD</text>
<text transform="translate(679.0 376.0) rotate(-90)" y="2.900" textLength="38" lengthAdjust="spacingAndGlyphs">SMITH-RD</text>
<text transform="translate(679.2 456.3) rotate(-84)" y="2.900" textLength="38" lengthAdjust="spacingAndGlyphs">SMITH-RD</text>
<text transform="translate(788.0 365.0) rotate(-86)" y="2.900" textLength="49" lengthAdjust="spacingAndGlyphs">GIARDINI-RD</text>
<text transform="translate(803.2 361.7) rotate(-85)" y="2.900" textLength="47" lengthAdjust="spacingAndGlyphs">COULTER-RD</text>
<text transform="translate(844.6 347.4) rotate(-85)" y="2.900" textLength="38" lengthAdjust="spacingAndGlyphs">FERRIS-RD</text>
<text transform="translate(784.7 398.3) rotate(4.9)" y="2.900" textLength="80" lengthAdjust="spacingAndGlyphs">6TH-CONCESSION-RD</text>
<text transform="translate(704.5 411.6) rotate(4.1)" y="2.900" textLength="79" lengthAdjust="spacingAndGlyphs">5TH-CONCESSION-RD</text>
<text transform="translate(823.3 419.0) rotate(4.1)" y="2.900" textLength="79" lengthAdjust="spacingAndGlyphs">5TH-CONCESSION-RD</text>
<text transform="translate(781.0 435.4) rotate(3.8)" y="2.900" textLength="80" lengthAdjust="spacingAndGlyphs">4TH-CONCESSION-RD</text>
<text transform="translate(764.5 452.3) rotate(4.1)" y="2.900" textLength="80" lengthAdjust="spacingAndGlyphs">3RD-CONCESSION-RD</text>
<text transform="translate(696.8 488.2) rotate(32.5)" y="2.900" textLength="34" lengthAdjust="spacingAndGlyphs">GORE-RD</text>
<text transform="translate(730.2 528.0) rotate(-88)" y="2.900" textLength="36" lengthAdjust="spacingAndGlyphs">DUNN-RD</text>
<text transform="translate(765.7 502.0) rotate(-80)" y="2.900" textLength="46" lengthAdjust="spacingAndGlyphs">SNAKE-LANE</text>
<text transform="translate(784.5 491.6) rotate(-81.5)" y="2.900" textLength="44" lengthAdjust="spacingAndGlyphs">FERRISS-RD</text>
<text transform="translate(790.7 539.6) rotate(-82)" y="2.900" textLength="29" lengthAdjust="spacingAndGlyphs">BELL-RD</text>
<text transform="translate(803.9 522.5) rotate(-82)" y="2.900" textLength="34" lengthAdjust="spacingAndGlyphs">RIDGE-RD</text>
<text transform="translate(848.3 512.7) rotate(-85)" y="2.900" textLength="28" lengthAdjust="spacingAndGlyphs">ILER-RD</text>
</g>
<g font-size="13.500" font-weight="bold" fill="#fff" text-anchor="middle" stroke="#efefef" stroke-width="0.600" paint-order="stroke">
<text x="488" y="169.2" textLength="48" lengthAdjust="spacingAndGlyphs">LaSalle</text>
<text x="618.8" y="175.2" textLength="49" lengthAdjust="spacingAndGlyphs">LaSalle</text>
<text x="733.5" y="181.3" textLength="67" lengthAdjust="spacingAndGlyphs">Tecumseh</text>
<text x="1032.8" y="191.6" textLength="68" lengthAdjust="spacingAndGlyphs">Lakeshore</text>
<text x="588.5" y="332.8" textLength="87" lengthAdjust="spacingAndGlyphs">Amherstburg</text>
<text x="1014.6" y="368.0" textLength="65" lengthAdjust="spacingAndGlyphs">Kingsville</text>
<text x="1191.6" y="378.0" textLength="77" lengthAdjust="spacingAndGlyphs">Leamington</text>
</g>
</svg>
<!-- map overlay ui -->
<div class="abs" style="left:302px;top:151px;width:34px;height:33px;background:#fff;border-right:1px solid #d8d8d8;border-bottom:1px solid #d8d8d8"></div>
<svg class="abs" style="left:310px;top:158px" width="16" height="18" viewBox="0 0 16 18" fill="none" stroke="#6a6a6a" stroke-width="1.600"><path d="M11.500 2.500 L5 9 L11.500 15.500"/></svg>
<div class="abs" style="left:340.500px;top:155px;width:99px;height:29px;background:#1a6fc4;border-radius:3px;color:#fff;font-size:15.300px;line-height:30.500px;text-align:center;font-family:'DejaVu Sans','Liberation Sans',sans-serif;letter-spacing:-0.2px">I want to...</div>
<div class="abs mbtn" style="left:305.500px;top:187.500px;width:30px;height:30.500px"></div>
<svg class="abs" style="left:305.500px;top:187.500px" width="30" height="30" viewBox="0 0 30 30" fill="none" stroke="#6e6e6e" stroke-width="1.300"><circle cx="15" cy="15.500" r="6.300"/><path d="M15 5.500 V9.200 M15 21.800 V25.500 M5 15.500 H8.700 M21.300 15.500 H25"/><circle cx="15" cy="15.500" r="1.600" fill="#6e6e6e" stroke="none"/></svg>
<div class="abs mbtn" style="left:305.500px;top:223px;width:30px;height:59px"></div>
<div class="abs" style="left:306.500px;top:252.500px;width:28px;height:1px;background:#d8d8d8"></div>
<svg class="abs" style="left:305.500px;top:223px" width="30" height="59" viewBox="0 0 30 59" fill="none" stroke="#6e6e6e" stroke-width="1.300"><path d="M8 15 H22 M15 8 V22 M8 44.500 H22"/></svg>
<div class="abs mbtn" style="left:305.500px;top:286.500px;width:30px;height:30px"></div>
<svg class="abs" style="left:305.500px;top:286.500px" width="30" height="30" viewBox="0 0 30 30" fill="none" stroke="#6e6e6e" stroke-width="1.300" stroke-linejoin="round"><path d="M15 8.500 C12 6.300 8 6 5.500 7 V21 C8 20 12 20.300 15 22.500 C18 20.300 22 20 24.500 21 V7 C22 6 18 6.300 15 8.500 V22.500"/></svg>
<div class="abs" style="left:302.500px;top:416.500px;width:9.500px;height:20.500px;background:#f3f3f3;border:1px solid #d0d0d0;border-left:none;border-radius:0 3px 3px 0"></div>
<div class="abs" style="left:305px;top:420.500px;width:1px;height:12.500px;background:#777;box-shadow:2px 0 0 #777,4px 0 0 #777"></div>
<!-- tools button -->
<div class="abs" style="left:1190px;top:156px;width:52px;height:53px;background:#fff;border-radius:3px 0 0 3px"></div>
<svg class="abs" style="left:1204px;top:164px" width="24" height="24" viewBox="0 0 24 24" fill="none"><path d="M17.400 6.700 L6.300 16.300" stroke="#8c8c8c" stroke-width="2.600"/><circle cx="17.400" cy="6.700" r="3.500" fill="#8c8c8c"/><circle cx="6.300" cy="16.300" r="3.500" fill="#8c8c8c"/><path d="M17.600 6.500 L22 2.500" stroke="#fff" stroke-width="2.400"/><path d="M6.100 16.500 L1.500 20.500" stroke="#fff" stroke-width="2.400"/><path d="M3.900 3.800 L12.600 12" stroke="#fff" stroke-width="2.400"/><path d="M3.900 3.800 L12.600 12" stroke="#a8a8a8" stroke-width="1"/><path d="M12.600 11.600 L20.800 18.800" stroke="#fff" stroke-width="4.600"/><path d="M13 12 L20.600 18.600" stroke="#1f78c8" stroke-width="3.300"/><path d="M14.500 13.300 L20 18.100" stroke="#fff" stroke-width="0.800" stroke-dasharray="0.900 0.900"/></svg>
<div class="abs" style="left:1190px;top:191px;width:52px;text-align:center;font-size:10.700px;color:#222">Tools</div>
<!-- bottom widgets -->
<div class="abs" style="left:307px;top:622px;width:53.500px;height:53px;background:#fff;border-radius:3px"></div>
<svg class="abs" style="left:322.500px;top:630px" width="22" height="22" viewBox="0 0 22 22"><rect x="1" y="2" width="20" height="19" rx="1.500" fill="#c8c8c8"/><path d="M1 14 L9 21 M21 13 L13 21 M1 6 L6 11 M21 5 L16 11" stroke="#fff" stroke-width="1.600"/><path d="M11 17.500 C8 13.500 5.800 11.500 5.800 8.500 A5.200 5.200 0 0 1 16.200 8.500 C16.200 11.500 14 13.500 11 17.500 Z" fill="#1f78c8" stroke="#fff" stroke-width="1"/><circle cx="11" cy="8.500" r="2.200" fill="#fff"/></svg>
<div class="abs" style="left:306.500px;top:656px;width:53.500px;text-align:center;font-size:10.800px;color:#111;white-space:nowrap">2024 Aer...</div>
<div class="abs" style="left:366px;top:646.500px;width:28.500px;height:27.500px;background:#fff;border-radius:3px"></div>
<svg class="abs" style="left:368px;top:648px" width="25" height="25" viewBox="0 0 25 25" fill="none"><path d="M6 22 C6 12 11 5 22 3 V22 Z" fill="#d4d4d4"/><path d="M6 22 H22 M8 16 H22 M11 10 H22 M16 5 V22 M11 10 V22 M22 3 V22" stroke="#fff" stroke-width="1"/><path d="M6 22 C6 12 11 5 22 3" stroke="#999" stroke-width="1"/><text x="2" y="8.500" font-size="6.500" font-weight="bold" fill="#1f78c8" font-family="Liberation Sans, sans-serif">X</text><text x="2" y="16" font-size="6.500" font-weight="bold" fill="#1f78c8" font-family="Liberation Sans, sans-serif">Y</text></svg>
<div class="abs" style="left:401px;top:646.500px;width:157px;height:27.500px;background:#fff;border-radius:3px"></div>
<svg class="abs" style="left:401px;top:646.500px" width="157" height="27.500" viewBox="401 646.500 157 27.500" font-family="Liberation Sans, sans-serif"><rect x="406" y="652.500" width="100.500" height="5.400" fill="#fff" stroke="#222" stroke-width="0.900"/><rect x="406" y="652.500" width="25" height="2.700" fill="#222"/><rect x="431" y="655.200" width="25" height="2.700" fill="#222"/><rect x="456" y="652.500" width="25.500" height="2.700" fill="#222"/><rect x="481.500" y="655.200" width="25" height="2.700" fill="#222"/><g font-size="9.500" font-weight="bold" fill="#606060"><text x="405.500" y="668.500">0</text><text x="453" y="668.500">3</text><text x="500.500" y="668.500" textLength="19.500" lengthAdjust="spacingAndGlyphs">6km</text></g></svg>
<div class="abs" style="left:564px;top:646.500px;width:28px;height:27.500px;background:#fff;border-radius:3px"></div>
<svg class="abs" style="left:564px;top:646.500px" width="28" height="27.500" viewBox="0 0 28 27.500" font-family="Liberation Serif, serif"><rect x="4" y="9" width="15" height="9.500" fill="#fff" stroke="#999" stroke-width="0.700"/><text x="5" y="16.800" font-size="7.500" fill="#555" textLength="13" lengthAdjust="spacingAndGlyphs">1:500</text><path d="M19.500 7.500 h3.500 M21.200 7.500 V20.500 M19.500 20.500 h3.500" stroke="#1f78c8" stroke-width="1" fill="none"/></svg>
<div class="abs" style="left:1215px;top:646.500px;width:27px;height:28.500px;background:#fff;border-radius:3px 0 0 0"></div>
<svg class="abs" style="left:1222px;top:654px" width="13" height="13" viewBox="0 0 13 13"><path d="M2.500 2.500 H9 L6.800 4.700 L10.500 8.400 L8.400 10.500 L4.700 6.800 L2.500 9 Z" fill="#666"/></svg>
</body></html>
